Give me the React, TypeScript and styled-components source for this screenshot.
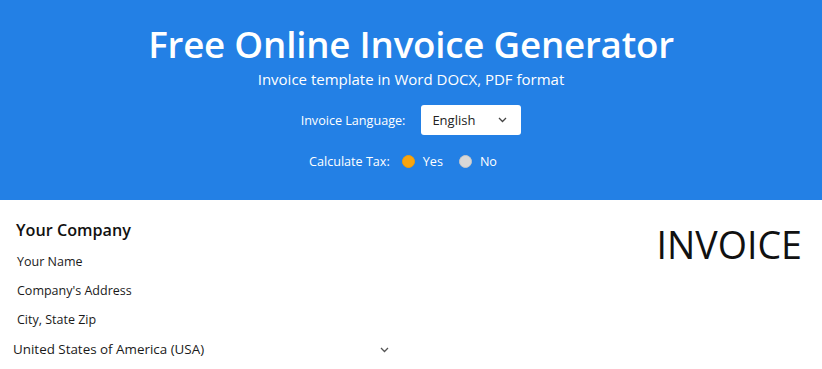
import React, { useState } from "react";
import styled, { createGlobalStyle } from "styled-components";

const GlobalStyle = createGlobalStyle`
  html, body {
    margin: 0;
    padding: 0;
    background: #fff;
    font-family: "Open Sans", "Liberation Sans", sans-serif;
  }
  * { box-sizing: border-box; }
`;

const Header = styled.header`
  height: 200px;
  background: #2380e5;
  color: #fff;
  display: flex;
  flex-direction: column;
  align-items: center;
  padding-top: 21px;
`;

const Title = styled.h1`
  margin: 0;
  font-size: 36.7px;
  font-weight: 600;
  line-height: 46px;
  letter-spacing: -0.2px;
`;

const Subtitle = styled.p`
  margin: 1px 0 0;
  font-size: 15px;
  line-height: 22px;
`;

const OptionRow = styled.div<{ $gap?: number; $top?: number; $shift?: number }>`
  display: flex;
  align-items: center;
  gap: ${(p) => p.$gap ?? 16}px;
  font-size: 12.6px;
  margin-top: ${(p) => p.$top ?? 0}px;
  padding-right: ${(p) => p.$shift ?? 0}px;
`;

const LangSelect = styled.div`
  width: 100px;
  height: 30px;
  background: #fff;
  border-radius: 3px;
  color: #222;
  display: flex;
  align-items: center;
  justify-content: space-between;
  padding: 0 14px 0 11px;
  font-size: 13px;
`;

const RadioLabel = styled.label<{ $ml?: number }>`
  display: flex;
  align-items: center;
  gap: 8px;
  cursor: pointer;
  margin-left: ${(p) => p.$ml ?? 0}px;
`;

const Dot = styled.span<{ $on: boolean }>`
  width: 13px;
  height: 13px;
  border-radius: 50%;
  background: ${(p) => (p.$on ? "#f8a50f" : "#d8d8d8")};
  border: 1px solid ${(p) => (p.$on ? "#f29d05" : "#c8c8c8")};
`;

const Body = styled.main`
  display: flex;
  justify-content: space-between;
  padding: 18px 20px 0 13px;
  color: #111;
`;

const CompanyCol = styled.div`
  width: 376px;
  display: flex;
  flex-direction: column;
`;

const CompanyName = styled.div`
  font-size: 16.2px;
  font-weight: 600;
  line-height: 24px;
  padding-left: 3px;
  margin-bottom: 5px;
`;

const Field = styled.div`
  font-size: 12.5px;
  line-height: 29px;
  padding-left: 4px;
  color: #1a1a1a;
`;

const CountrySelect = styled.div`
  display: flex;
  justify-content: space-between;
  align-items: center;
  font-size: 13.4px;
  line-height: 29px;
  margin-top: 1px;
  color: #1a1a1a;
`;

const InvoiceTitle = styled.div`
  font-size: 37.6px;
  line-height: 48px;
  font-weight: 400;
  color: #111;
  margin-top: 3px;
`;

const Chevron = ({ color = "#333" }: { color?: string }) => (
  <svg width="9" height="6" viewBox="0 0 9 6" fill="none">
    <path d="M1 1l3.5 3.5L8 1" stroke={color} strokeWidth="1.3" />
  </svg>
);

export default function App() {
  const [tax, setTax] = useState(true);
  return (
    <>
      <GlobalStyle />
      <Header>
        <Title>Free Online Invoice Generator</Title>
        <Subtitle>Invoice template in Word DOCX, PDF format</Subtitle>
        <OptionRow $top={15}>
          <span>Invoice Language:</span>
          <LangSelect>
            <span>English</span>
            <Chevron color="#444" />
          </LangSelect>
        </OptionRow>
        <OptionRow $top={18} $gap={0} $shift={16}>
          <span>Calculate Tax:</span>
          <RadioLabel $ml={12} onClick={() => setTax(true)}>
            <Dot $on={tax} />
            Yes
          </RadioLabel>
          <RadioLabel $ml={16} onClick={() => setTax(false)}>
            <Dot $on={!tax} />
            No
          </RadioLabel>
        </OptionRow>
      </Header>
      <Body>
        <CompanyCol>
          <CompanyName>Your Company</CompanyName>
          <Field>Your Name</Field>
          <Field>Company's Address</Field>
          <Field>City, State Zip</Field>
          <CountrySelect>
            <span>United States of America (USA)</span>
            <Chevron color="#555" />
          </CountrySelect>
        </CompanyCol>
        <InvoiceTitle>INVOICE</InvoiceTitle>
      </Body>
    </>
  );
}
